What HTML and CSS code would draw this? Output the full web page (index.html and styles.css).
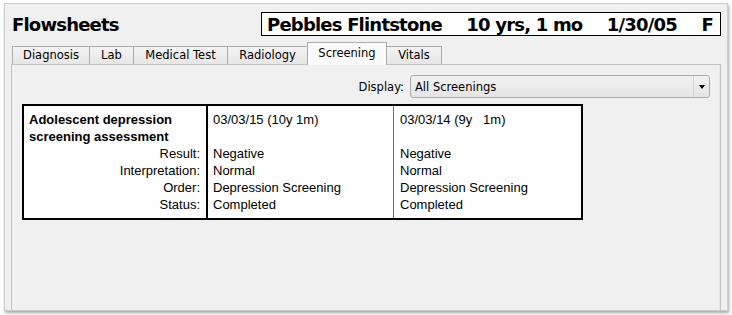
FILE: index.html
```html
<!DOCTYPE html>
<html>
<head>
<meta charset="utf-8">
<link rel="stylesheet" href="styles.css">
</head>
<body>
<div class="window">
  <div class="header">
    <div class="title">Flowsheets</div>
    <div class="patient">
      <span>Pebbles Flintstone</span>
      <span>10 yrs, 1 mo</span>
      <span>1/30/05</span>
      <span>F</span>
    </div>
  </div>
  <div class="tabs">
    <div class="tab t-diag">Diagnosis</div>
    <div class="tab t-lab">Lab</div>
    <div class="tab t-med">Medical Test</div>
    <div class="tab t-rad">Radiology</div>
    <div class="tab t-scr selected">Screening</div>
    <div class="tab t-vit">Vitals</div>
  </div>
  <div class="pane">
    <div class="display-row">
      <span class="display-label">Display:</span>
      <div class="select">
        <span class="select-text">All Screenings</span>
        <span class="select-btn"><span class="arrow"></span></span>
      </div>
    </div>
    <div class="grid">
      <div class="col col-label">
        <div class="head">Adolescent depression<br>screening assessment</div>
        <div class="lbl">Result:</div>
        <div class="lbl">Interpretation:</div>
        <div class="lbl">Order:</div>
        <div class="lbl">Status:</div>
      </div>
      <div class="col col-a">
        <div class="line">03/03/15 (10y 1m)</div>
        <div class="line"></div>
        <div class="line">Negative</div>
        <div class="line">Normal</div>
        <div class="line">Depression Screening</div>
        <div class="line">Completed</div>
      </div>
      <div class="col col-b">
        <div class="line">03/03/14 (9y   1m)</div>
        <div class="line"></div>
        <div class="line">Negative</div>
        <div class="line">Normal</div>
        <div class="line">Depression Screening</div>
        <div class="line">Completed</div>
      </div>
    </div>
  </div>
</div>
</body>
</html>
```

FILE: styles.css
```css
html, body {
  margin: 0;
  padding: 0;
  background: #ffffff;
}

body {
  width: 732px;
  height: 315px;
  overflow: hidden;
}

.window {
  margin: 3px 0 0 4px;
  width: 724px;
  height: 308px;
  box-sizing: border-box;
  border: 1px solid #cdcdcd;
  background: #f0f0f0;
  box-shadow: 1px 2px 3px rgba(0, 0, 0, 0.35);
  padding: 0 6px 0 6px;
  display: flex;
  flex-direction: column;
}

.header {
  height: 38px;
  display: flex;
  align-items: flex-start;
  flex: none;
}

.title {
  font-family: "DejaVu Sans", sans-serif;
  font-weight: bold;
  font-size: 18px;
  letter-spacing: -0.8px;
  line-height: 22px;
  padding-top: 10px;
  margin-left: 1px;
  color: #000;
}

.patient {
  margin-left: auto;
  margin-top: 8px;
  width: 460px;
  height: 24px;
  box-sizing: border-box;
  border: 1px solid #000;
  background: #fff;
  display: flex;
  justify-content: space-between;
  padding: 1px 7px 0 5px;
  font-family: "DejaVu Sans", sans-serif;
  font-weight: bold;
  font-size: 18px;
  letter-spacing: -0.8px;
  line-height: 21px;
  color: #000;
  white-space: nowrap;
}

.tabs {
  display: flex;
  align-items: flex-end;
  height: 22px;
  padding-left: 1px;
  flex: none;
  position: relative;
  z-index: 1;
}

.tab {
  height: 18px;
  box-sizing: border-box;
  border: 1px solid #acacac;
  border-bottom: none;
  margin-right: -1px;
  background: linear-gradient(#f3f3f3, #e6e6e6);
  font-family: "DejaVu Sans", sans-serif;
  font-size: 11.5px;
  line-height: 17px;
  text-align: center;
  color: #000;
  white-space: nowrap;
}

.t-diag { width: 78px; }
.t-lab { width: 45px; }
.t-med { width: 95px; }
.t-rad { width: 81px; }
.t-scr { width: 80px; }
.t-vit { width: 56px; }

.tab.selected {
  height: 23px;
  margin-bottom: -1px;
  background: #fbfbfb;
  line-height: 20px;
  padding-bottom: 3px;
  position: relative;
  z-index: 2;
}

.pane {
  flex: 1;
  border: 1px solid #c2c2c2;
  border-bottom: none;
  background: #f0f0f0;
  padding: 10px 10px 0 10px;
  box-shadow: inset -1px 0 0 #e6e6e6;
}

.display-row {
  display: flex;
  justify-content: flex-end;
  align-items: center;
  height: 23px;
}

.display-label {
  font-family: "DejaVu Sans", sans-serif;
  font-size: 11.5px;
  color: #000;
  margin-right: 6px;
}

.select {
  width: 300px;
  height: 23px;
  box-sizing: border-box;
  border: 1px solid #acacac;
  border-radius: 3px;
  background: linear-gradient(#f2f2f2, #e5e5e5);
  display: flex;
  align-items: center;
}

.select-text {
  flex: 1;
  padding-left: 4px;
  font-family: "DejaVu Sans", sans-serif;
  font-size: 11.5px;
  color: #000;
}

.select-btn {
  width: 15px;
  height: 21px;
  border-left: 1px solid #d4d4d4;
  display: flex;
  align-items: center;
  justify-content: center;
}

.arrow {
  width: 0;
  height: 0;
  border-left: 3.5px solid transparent;
  border-right: 3.5px solid transparent;
  border-top: 4px solid #000;
}

.grid {
  margin-top: 6px;
  width: 561px;
  box-sizing: border-box;
  border: 2px solid #000;
  background: #fff;
  display: grid;
  grid-template-columns: 184px 186px 187px;
  font-family: "Liberation Sans", Arial, sans-serif;
  font-size: 13px;
  line-height: 17px;
  color: #000;
}

.col {
  padding: 5px 0 5px 0;
}

.col-label {
  padding-left: 5px;
  padding-right: 6px;
  border-right: 2px solid #000;
}

.head {
  font-weight: bold;
}

.lbl {
  text-align: right;
}

.col-a {
  padding-left: 5px;
  border-right: 1px solid #3d7ab8;
}

.col-b {
  padding-left: 6px;
}

.line {
  height: 17px;
  white-space: pre;
}
```
